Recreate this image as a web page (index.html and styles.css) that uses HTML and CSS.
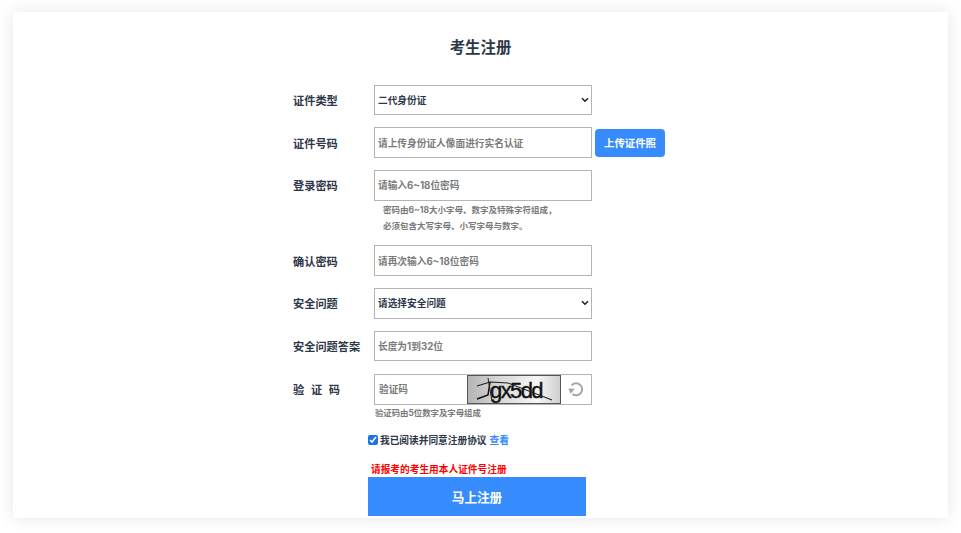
FILE: index.html
```html
<!DOCTYPE html>
<html lang="zh-CN">
<head>
    <meta charset="UTF-8">
    <title>考生注册</title>
    <link rel="stylesheet" href="styles.css">
</head>
<body>
    <div class="card">
        <h1 class="title">考生注册</h1>
        <form class="form">
            <div class="row">
                <label>证件类型</label>
                <select class="field"><option>二代身份证</option></select>
            </div>
            <div class="row">
                <label>证件号码</label>
                <input class="field" type="text" placeholder="请上传身份证人像面进行实名认证">
                <button type="button" class="upload">上传证件照</button>
            </div>
            <div class="row">
                <label>登录密码</label>
                <input class="field" type="password" placeholder="请输入6~18位密码">
            </div>
            <div class="hint">密码由6~18大小字母、数字及特殊字符组成，<br>必须包含大写字母、小写字母与数字。</div>
            <div class="row">
                <label>确认密码</label>
                <input class="field" type="password" placeholder="请再次输入6~18位密码">
            </div>
            <div class="row">
                <label>安全问题</label>
                <select class="field"><option>请选择安全问题</option></select>
            </div>
            <div class="row">
                <label>安全问题答案</label>
                <input class="field" type="text" placeholder="长度为1到32位">
            </div>
            <div class="row row-code">
                <label class="spread"><span>验</span><span>证</span><span>码</span></label>
                <div class="code-group">
                    <input class="code-input" type="text" placeholder="验证码">
                    <div class="code-img">
                        <svg width="92" height="29" viewBox="0 0 92 29">
                            <text x="22" y="22" class="code-text">gx5dd</text>
                            <path d="M9 10 L22 6 L40 7 L84 24" fill="none" stroke="#222" stroke-width="1.1"/>
                            <path d="M22 6 L20 19 L9 23" fill="none" stroke="#111" stroke-width="1.5"/>
                            <path d="M20 2 L24 25" fill="none" stroke="#222" stroke-width="1"/>
                        </svg>
                    </div>
                    <div class="code-refresh">
                        <svg width="16" height="16" viewBox="0 0 16 16">
                            <path d="M3.6 4.4 A6 6 0 1 1 4.4 13" fill="none" stroke="#a6a6a6" stroke-width="2"/>
                            <path d="M0.4 7.4 L7 7.8 L2.6 12.8 Z" fill="#a6a6a6"/>
                        </svg>
                    </div>
                </div>
            </div>
            <div class="code-hint">验证码由5位数字及字母组成</div>
            <div class="submit-area">
                <div class="agree">
                    <input type="checkbox" checked>
                    <span>我已阅读并同意注册协议</span>
                    <a href="#">查看</a>
                </div>
                <div class="warn">请报考的考生用本人证件号注册</div>
                <button type="button" class="submit">马上注册</button>
            </div>
        </form>
    </div>
</body>
</html>
```

FILE: styles.css
```css
html, body {
    margin: 0;
    padding: 0;
    height: 533px;
    overflow: hidden;
    background-color: #fff;
}

body {
    font-family: "Inter", "Noto Sans CJK SC", sans-serif;
    color: #2d3748;
    padding-top: 12px;
    box-sizing: border-box;
}

.card {
    margin: 0 13px;
    height: 506px;
    background-color: #fff;
    box-shadow: 0 0 16px rgba(0, 0, 0, 0.1);
    overflow: hidden;
}

.title {
    margin: 24.5px 0 26.1px;
    font-size: 15.4px;
    line-height: 22px;
    font-weight: 700;
    text-align: center;
}

.form {
    margin-left: 280px;
    width: 400px;
}

.row {
    display: flex;
    align-items: center;
    height: 30.5px;
    margin-bottom: 12.3px;
}

.row label {
    width: 81px;
    flex: none;
    padding-top: 2px;
    font-size: 11.2px;
    line-height: 28px;
    font-weight: 700;
}

.row label.spread {
    display: flex;
    justify-content: space-between;
    width: 47px;
    margin-right: 34px;
}

.field {
    width: 218px;
    height: 30.5px;
    box-sizing: border-box;
    border: 1px solid #b4b4b4;
    border-radius: 0;
    background-color: #fff;
    padding: 1px 3px 0;
    font-family: inherit;
    font-size: 9.7px;
    font-weight: 700;
    color: #2d3748;
    outline: none;
}

select.field {
    appearance: none;
    padding-left: 3px;
    background-image: url("data:image/svg+xml,%3Csvg xmlns='http://www.w3.org/2000/svg' width='8' height='6'%3E%3Cpath d='M1 1.2 L4 4.2 L7 1.2' fill='none' stroke='%23222' stroke-width='1.6'/%3E%3C/svg%3E");
    background-repeat: no-repeat;
    background-position: right 2px center;
}

input::placeholder {
    color: #7a7a7a;
    font-weight: 700;
}

.upload {
    margin-left: 3px;
    width: 70px;
    height: 28px;
    border: none;
    border-radius: 4px;
    background-color: #368cfc;
    color: #fff;
    font-family: inherit;
    font-size: 10.4px;
    font-weight: 700;
    padding: 0;
}

.hint {
    margin: -11.3px 0 11.7px 90px;
    font-size: 8.5px;
    line-height: 16px;
    font-weight: 700;
    color: #7a7a7a;
}

.row-code {
    margin-bottom: 3px;
}

.code-group {
    display: flex;
    width: 218px;
    height: 31px;
    box-sizing: border-box;
    border: 1px solid #b4b4b4;
}

.code-input {
    width: 92px;
    flex: none;
    box-sizing: border-box;
    border: none;
    padding: 1px 4px 0;
    font-family: inherit;
    font-size: 9.7px;
    outline: none;
}

.code-img {
    width: 94px;
    flex: none;
    box-sizing: border-box;
    border: 1px solid #555;
    background: linear-gradient(90deg, #b5b5b5, #d8d8d8 35%, #f6f6f6 75%, #cfcfcf);
    overflow: hidden;
}

.code-text {
    font-family: "Liberation Sans", sans-serif;
    font-size: 22px;
    fill: #111;
    stroke: #111;
    stroke-width: 0.4px;
    letter-spacing: -1.6px;
}

.code-refresh {
    flex: 1;
    display: flex;
    align-items: center;
    justify-content: center;
}

.code-hint {
    margin-left: 82px;
    font-size: 8.4px;
    line-height: 12px;
    font-weight: 700;
    color: #7a7a7a;
}

.submit-area {
    margin-left: 75px;
    width: 218px;
}

.agree {
    display: flex;
    align-items: center;
    height: 18px;
    margin-top: 11.5px;
    font-size: 9.7px;
    font-weight: 700;
}

.agree input {
    width: 10px;
    height: 10px;
    margin: 0 2px 0 0;
    accent-color: #1a73e8;
}

.agree a {
    margin-left: 3px;
    color: #368cfc;
    text-decoration: none;
    font-weight: 700;
}

.warn {
    margin: 14px 0 0 3px;
    font-size: 9.7px;
    line-height: 14px;
    font-weight: 700;
    color: #f00;
}

.submit {
    display: block;
    width: 218px;
    height: 39px;
    border: none;
    background-color: #368cfc;
    color: #fff;
    font-family: inherit;
    font-size: 12.6px;
    font-weight: 700;
    padding: 0;
}
```
